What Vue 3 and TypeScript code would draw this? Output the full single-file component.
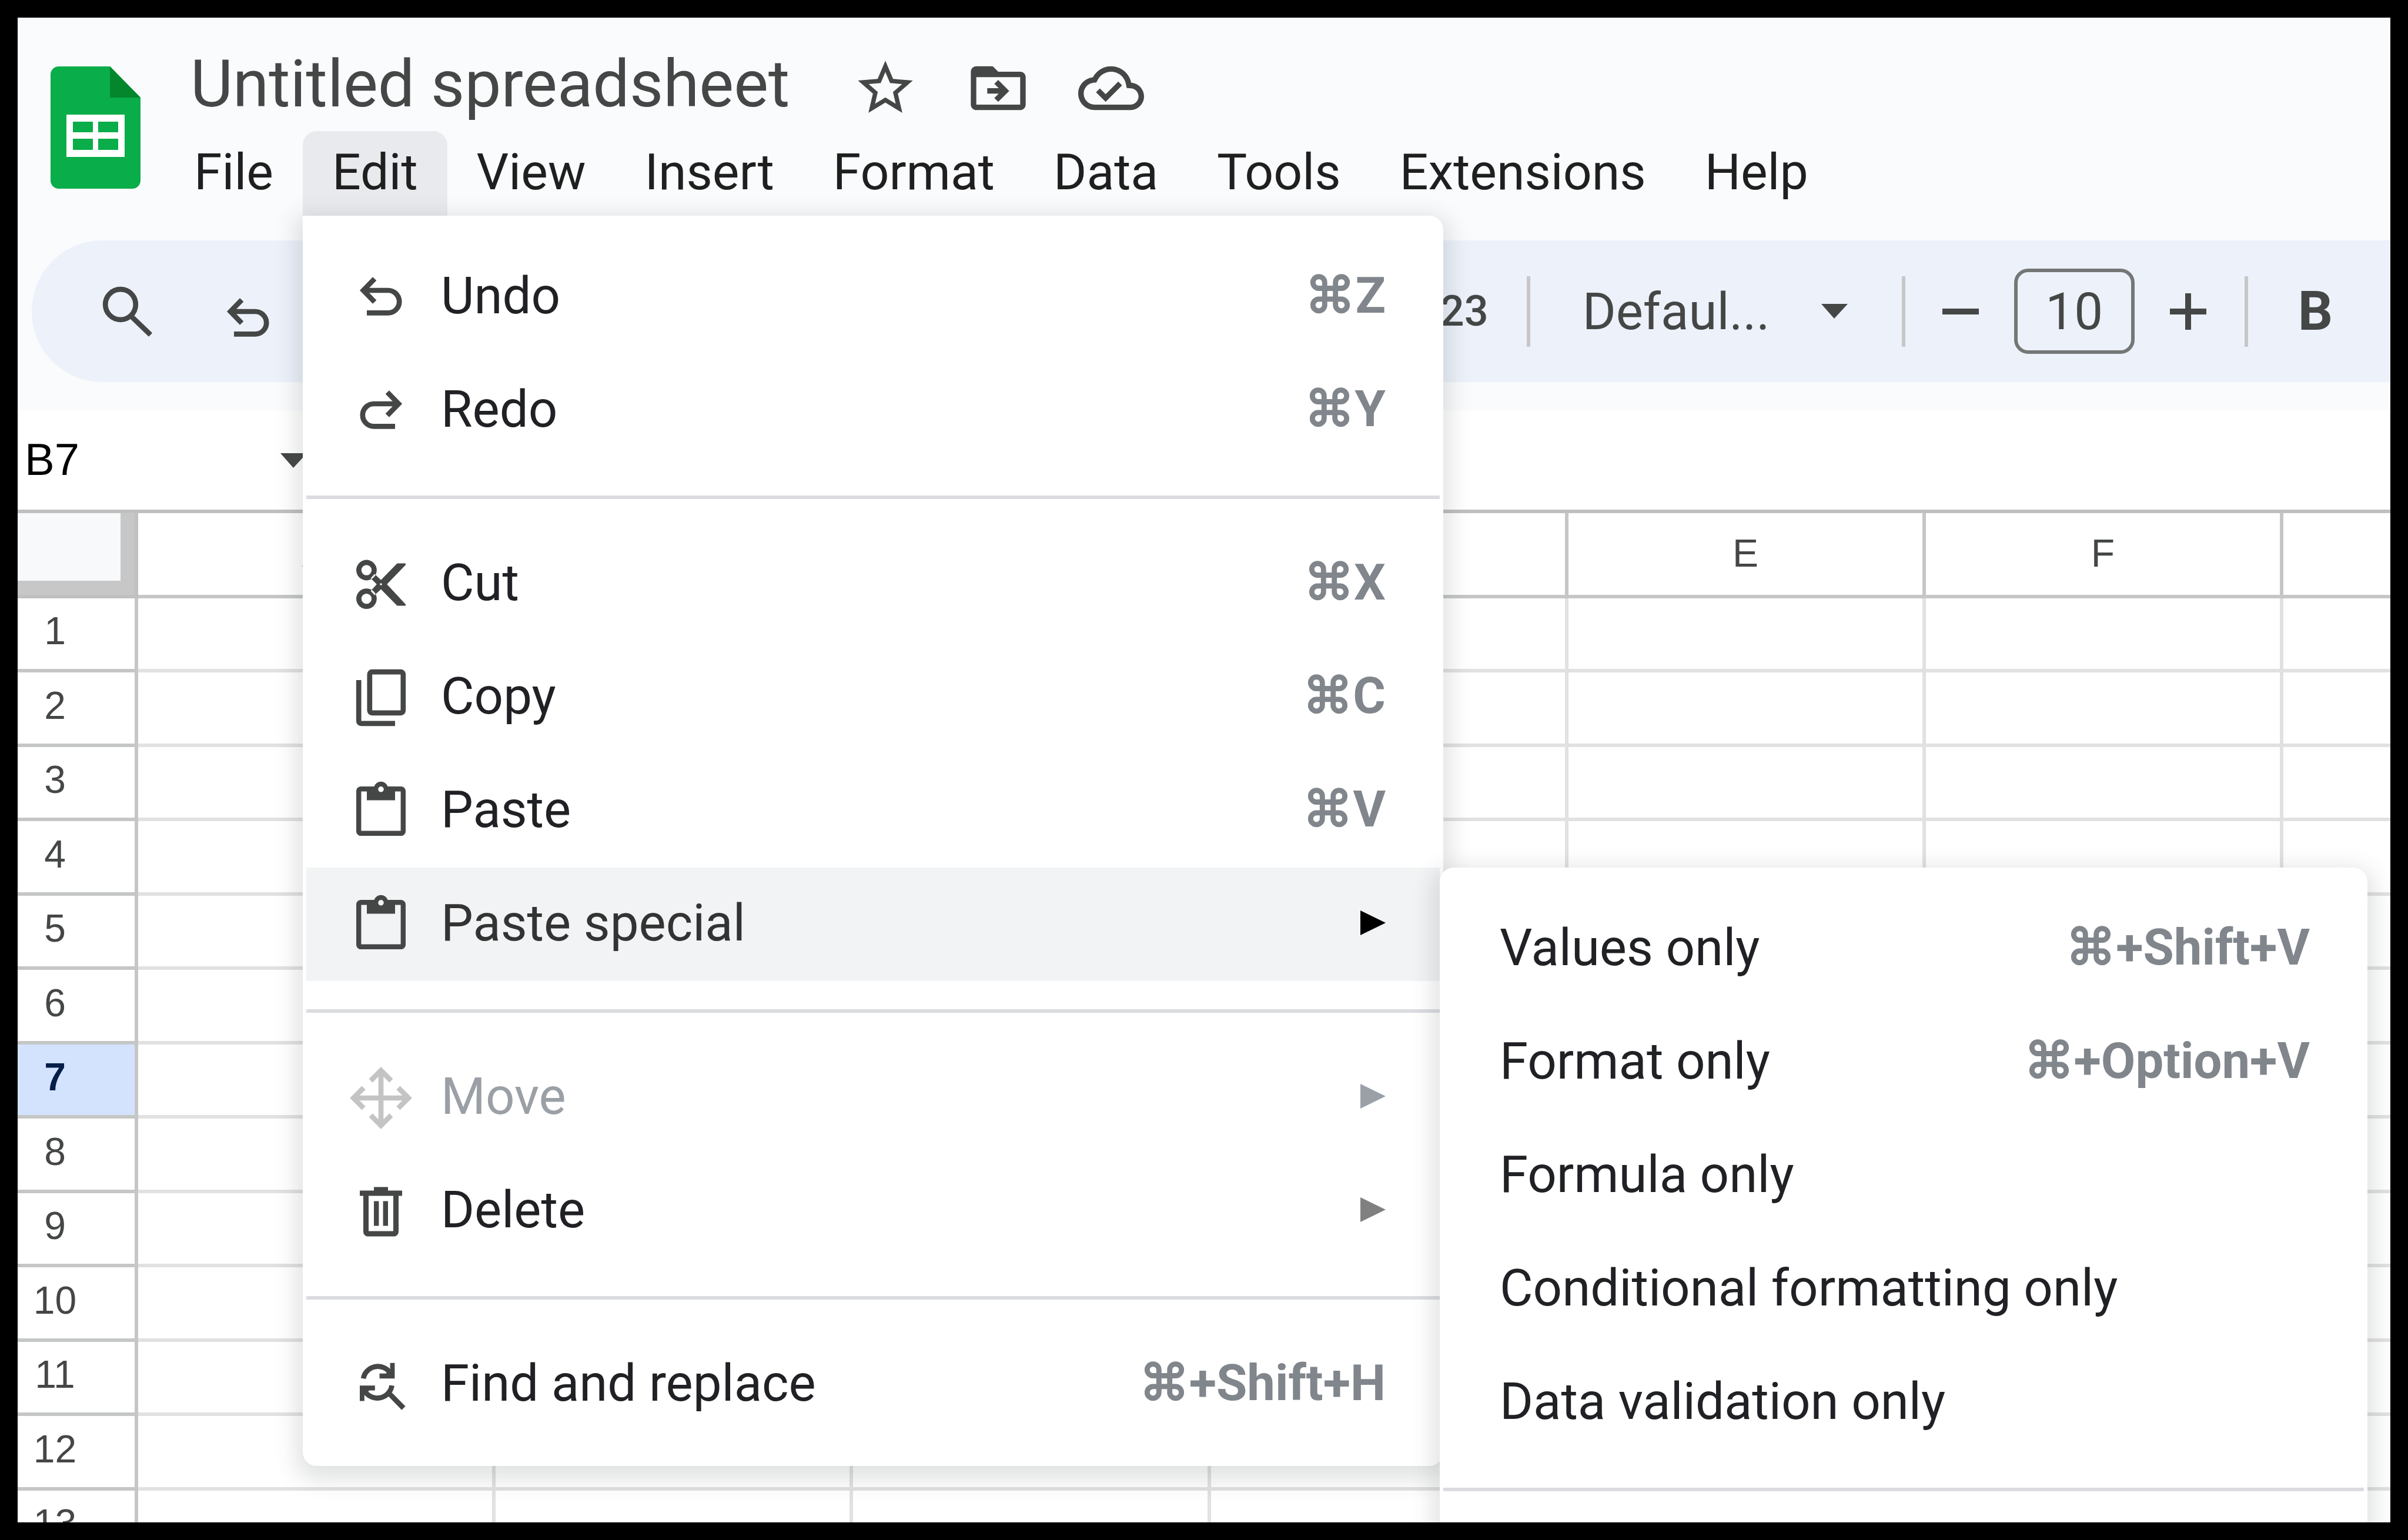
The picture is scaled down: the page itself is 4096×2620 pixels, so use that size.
<script setup lang="ts">
import { ref } from 'vue'

interface Icon {
  fill?: string
  stroke?: string
}

interface MenuEntry {
  label: string
  icon?: Icon
  shortcut?: string
  submenu?: MenuEntry[][]
  expandable?: boolean
  disabled?: boolean
  active?: boolean
}

const icons: Record<string, Icon> = {
  undo: { stroke: 'M4 7H11a3.2 3.2 0 0 1 0 6.4H5M7.2 3.7 4 7l3.2 3.3' },
  redo: { stroke: 'M14 7H7a3.2 3.2 0 0 0 0 6.4h6M10.8 3.7 14 7l-3.2 3.3' },
  cut: {
    fill:
      'M4.9 2.1a2.9 2.9 0 1 0 0 5.8 2.9 2.9 0 0 0 0-5.8zm0 1.45a1.45 1.45 0 1 1 0 2.9 1.45 1.45 0 0 1 0-2.9z' +
      'M4.9 10.2a2.9 2.9 0 1 0 0 5.8 2.9 2.9 0 0 0 0-5.8zm0 1.45a1.45 1.45 0 1 1 0 2.9 1.45 1.45 0 0 1 0-2.9z' +
      'M7.2 6.1 9 7.8l4.6-4.7H16v.4L10.7 9 16 14.7v.4h-2.4L9 10.4l-1.8 1.7-1.1-1.2L7.8 9 6.1 7.3zM9 8.7a.3.3 0 1 0 0 .6.3.3 0 0 0 0-.6z',
  },
  copy: {
    stroke: 'M6.5 1.7h8.1c.4 0 .7.3.7.7v10.2c0 .4-.3.7-.7.7H6.5c-.4 0-.7-.3-.7-.7V2.4c0-.4.3-.7.7-.7zM2.7 4v11.6c0 .4.3.7.7.7H13',
  },
  paste: {
    fill:
      'M14.7 2h-3.8a2 2 0 0 0-3.8 0H3.3C2.6 2 2 2.6 2 3.3v11.4c0 .7.6 1.3 1.3 1.3h11.4c.7 0 1.3-.6 1.3-1.3V3.3c0-.7-.6-1.3-1.3-1.3z' +
      'M9 2a.8.8 0 1 1 0 1.6A.8.8 0 0 1 9 2zm5.6 12.6H3.4V3.4H5v2.5h8V3.4h1.6z',
  },
  move: {
    stroke:
      'M9 1.2v15.6M1.2 9h15.6M6.1 4.1 9 1.2l2.9 2.9M6.1 13.9 9 16.8l2.9-2.9M4.1 6.1 1.2 9l2.9 2.9M13.9 6.1 16.8 9l-2.9 2.9',
  },
  trash: {
    fill:
      'M7 2.1h4v1h4v1.5h-1v10.1c0 .8-.6 1.4-1.4 1.4H5.4c-.8 0-1.4-.6-1.4-1.4V4.6H3V3.1h4zM5.5 4.6v10h7v-10z' +
      'M7 6.1h1.4v7H7zM9.6 6.1H11v7H9.6z',
  },
  findReplace: {
    fill: 'M12.9 2.8v4.4H8.6V5.8h1.8l1.2-1.2V2.8zM3 13.6V9.2h4.3v1.4H5.7l-1.4 1.3v1.7z',
    stroke: 'M4 7.2A4.2 4.2 0 0 1 11.6 5.6M4.4 10.8A4.2 4.2 0 0 0 12.1 9.2M11.1 11.2 15.4 15.6',
  },
  search: { stroke: 'M7 2.7a4.3 4.3 0 1 0 0 8.6 4.3 4.3 0 0 0 0-8.6zM10 10.3l5.5 5.3' },
}

const mainMenus = ['File', 'Edit', 'View', 'Insert', 'Format', 'Data', 'Tools', 'Extensions', 'Help']
const openMenu = ref('Edit')

const editMenu: MenuEntry[][] = [
  [
    { label: 'Undo', icon: icons.undo, shortcut: '⌘Z' },
    { label: 'Redo', icon: icons.redo, shortcut: '⌘Y' },
  ],
  [
    { label: 'Cut', icon: icons.cut, shortcut: '⌘X' },
    { label: 'Copy', icon: icons.copy, shortcut: '⌘C' },
    { label: 'Paste', icon: icons.paste, shortcut: '⌘V' },
    {
      label: 'Paste special',
      icon: icons.paste,
      expandable: true,
      active: true,
      submenu: [
        [
          { label: 'Values only', shortcut: '⌘+Shift+V' },
          { label: 'Format only', shortcut: '⌘+Option+V' },
          { label: 'Formula only' },
          { label: 'Conditional formatting only' },
          { label: 'Data validation only' },
        ],
        [],
      ],
    },
  ],
  [
    { label: 'Move', icon: icons.move, expandable: true, disabled: true },
    { label: 'Delete', icon: icons.trash, expandable: true },
  ],
  [{ label: 'Find and replace', icon: icons.findReplace, shortcut: '⌘+Shift+H' }],
]

const columns = ['A', 'B', 'C', 'D', 'E', 'F', 'G']
const rows = Array.from({ length: 13 }, (_, i) => i + 1)
const selectedRow = 7

const title = ref('Untitled spreadsheet')
const fontSize = ref('10')
const cellName = ref('B7')
</script>

<template>
  <div class="frame">
    <div class="window">
      <header class="header">
        <svg class="logo" viewBox="0 0 153 208" role="img" aria-label="Sheets">
          <path fill="#09ad49" d="M14 0h87l52 53v141a14 14 0 0 1-14 14H14a14 14 0 0 1-14-14V14A14 14 0 0 1 14 0z" />
          <path fill="#04862d" d="M101 0v53h52z" />
          <path
            fill="#fff"
            fill-rule="evenodd"
            d="M27 82h99v72H27zM38 94v18h34V94zM81 94v18h34V94zM38 123v19h34v-19zM81 123v19h34v-19z"
          />
        </svg>
        <div class="heading">
          <div class="title-row">
            <input v-model="title" class="title" aria-label="Document title" />
            <button class="title-button" aria-label="Star">
              <svg viewBox="0 0 24 24"><path d="M22 9.24l-7.19-.62L12 2 9.19 8.63 2 9.24l5.46 4.73L5.82 21 12 17.27 18.18 21l-1.63-7.03L22 9.24zM12 15.4l-3.76 2.27 1-4.28-3.32-2.88 4.38-.38L12 6.1l1.71 4.04 4.38.38-3.32 2.88 1 4.28L12 15.4z" /></svg>
            </button>
            <button class="title-button" aria-label="Move to folder">
              <svg viewBox="0 0 24 24"><path d="M20 6h-8l-2-2H4c-1.1 0-1.99.9-1.99 2L2 18c0 1.1.9 2 2 2h16c1.1 0 2-.9 2-2V8c0-1.1-.9-2-2-2zm0 12H4V8h16v10z" /><path d="M12.16 12H8v2h4.16l-1.59 1.59L11.99 17 16 13.01 11.99 9l-1.41 1.41L12.16 12z" /></svg>
            </button>
            <button class="title-button" aria-label="Saved to cloud">
              <svg viewBox="0 0 24 24"><path d="M19.35 10.04C18.67 6.59 15.64 4 12 4 9.11 4 6.6 5.64 5.35 8.04 2.34 8.36 0 10.91 0 14c0 3.31 2.69 6 6 6h13c2.76 0 5-2.24 5-5 0-2.64-2.05-4.78-4.65-4.96zM19 18H6c-2.21 0-4-1.79-4-4 0-2.05 1.53-3.76 3.56-3.97l1.07-.11.5-.95C8.08 7.14 9.94 6 12 6c2.62 0 4.88 1.86 5.39 4.43l.3 1.5 1.53.11c1.56.1 2.78 1.41 2.78 2.96 0 1.65-1.35 3-3 3zm-9-3.82l-2.09-2.09L6.5 13.5 10 17l6.01-6.01-1.41-1.41z" /></svg>
            </button>
          </div>

          <nav class="menubar">
            <div v-for="name in mainMenus" :key="name" class="menubar-item">
              <button class="menubar-button" :class="{ open: name === openMenu }">{{ name }}</button>

              <div v-if="name === 'Edit' && openMenu === 'Edit'" class="menu edit-menu">
                <ul v-for="(group, g) in editMenu" :key="g" class="menu-group">
                  <li v-for="entry in group" :key="entry.label" class="menu-row">
                    <button class="menu-item" :class="{ active: entry.active }" :disabled="entry.disabled">
                      <svg class="menu-icon" viewBox="0 0 18 18" aria-hidden="true">
                        <path v-if="entry.icon?.fill" class="solid" :d="entry.icon.fill" />
                        <path v-if="entry.icon?.stroke" class="line" :d="entry.icon.stroke" />
                      </svg>
                      <span class="label">{{ entry.label }}</span>
                      <span v-if="entry.shortcut" class="shortcut">{{ entry.shortcut }}</span>
                      <svg v-if="entry.expandable" class="expand" viewBox="0 0 43 42" aria-hidden="true">
                        <path d="M0 0v42l43-21z" />
                      </svg>
                    </button>

                    <div v-if="entry.submenu" class="menu paste-menu">
                      <ul v-for="(subgroup, s) in entry.submenu" :key="s" class="menu-group">
                        <li v-for="sub in subgroup" :key="sub.label" class="menu-row">
                          <button class="menu-item plain">
                            <span class="label">{{ sub.label }}</span>
                            <span v-if="sub.shortcut" class="shortcut">{{ sub.shortcut }}</span>
                          </button>
                        </li>
                      </ul>
                    </div>
                  </li>
                </ul>
              </div>
            </div>
          </nav>
        </div>
      </header>

      <div class="toolbar-area">
        <div class="toolbar">
          <div class="tools tools-start">
            <button class="tool" aria-label="Search the menus">
              <svg viewBox="0 0 18 18"><path class="line" :d="icons.search.stroke" /></svg>
            </button>
            <button class="tool" aria-label="Undo">
              <svg viewBox="0 -2 18 18"><path class="line" :d="icons.undo.stroke" /></svg>
            </button>
          </div>
          <div class="tools">
            <button class="number-format">123</button>
            <span class="divider"></span>
            <div class="font-picker">
              <select class="font-select" aria-label="Font">
                <option>Defaul...</option>
              </select>
              <svg class="caret" viewBox="0 0 45 25" aria-hidden="true"><path d="M0 0h45L22 25z" /></svg>
            </div>
            <span class="divider"></span>
            <div class="stepper">
              <button class="step" aria-label="Decrease font size">
                <svg viewBox="0 0 62 62"><path d="M0 26h62v10H0z" /></svg>
              </button>
              <input v-model="fontSize" class="font-size" aria-label="Font size" />
              <button class="step" aria-label="Increase font size">
                <svg viewBox="0 0 62 62"><path d="M0 26h26V0h10v26h26v10H36v26H26V36H0z" /></svg>
              </button>
            </div>
            <span class="divider"></span>
            <button class="bold" aria-label="Bold">B</button>
          </div>
        </div>
      </div>

      <div class="name-bar">
        <input v-model="cellName" class="name-box" aria-label="Name box" />
        <svg class="caret" viewBox="0 0 45 25" aria-hidden="true"><path d="M0 0h45L22 25z" /></svg>
      </div>

      <table class="grid">
        <colgroup>
          <col class="col-head" />
          <col v-for="c in 6" :key="c" class="col-cell" />
          <col />
        </colgroup>
        <thead>
          <tr>
            <th class="corner"></th>
            <th v-for="(c, i) in columns" :key="c" scope="col">{{ i < 6 ? c : '' }}</th>
          </tr>
        </thead>
        <tbody>
          <tr v-for="r in rows" :key="r">
            <th scope="row" :class="{ selected: r === selectedRow }">{{ r }}</th>
            <td v-for="c in columns" :key="c"></td>
          </tr>
        </tbody>
      </table>
    </div>
  </div>
</template>

<style>
body {
  margin: 0;
  background: #000;
}
</style>

<style scoped>
* {
  box-sizing: border-box;
}

button,
input,
select {
  margin: 0;
  padding: 0;
  border: 0;
  border-radius: 0;
  outline: 0;
  background: none;
  color: inherit;
  font: inherit;
}

svg {
  display: block;
  flex: none;
}

.frame {
  height: 100vh;
  padding: 30px;
  background: #000;
  font-family: Roboto, "Liberation Sans", sans-serif;
  font-size: 87px;
  color: #444746;
}

.window {
  display: flex;
  flex-direction: column;
  height: 100%;
  overflow: hidden;
  background: #fff;
}

.line {
  fill: none;
  stroke: currentColor;
  stroke-width: 1.45;
}

.solid {
  fill: currentColor;
  fill-rule: evenodd;
}

.header {
  display: flex;
  flex: none;
  gap: 41px;
  padding: 47px 0 42px 56px;
  background: #f9fbfd;
}

.logo {
  width: 153px;
  height: 208px;
  margin-top: 36px;
}

.title-row {
  display: flex;
  align-items: center;
  gap: 80px;
  height: 146px;
}

.title {
  width: 1090px;
  height: 146px;
  padding: 0 0 14px 44px;
  font-size: 111px;
}

.title-button svg {
  width: 112px;
  height: 112px;
  fill: currentColor;
}

.menubar {
  display: flex;
  font-size: 86px;
}

.menubar-item {
  position: relative;
}

.menubar-button {
  display: block;
  height: 144px;
  padding: 0 50px 6px;
  border-radius: 24px 24px 0 0;
  color: #1f1f1f;
}

.menubar-button.open {
  background: #e9eaee;
}

.menu {
  position: absolute;
  z-index: 2;
  padding: 42px 6px;
  border-radius: 24px;
  background: #fff;
  box-shadow: 0 12px 36px 12px rgba(60, 64, 67, 0.15);
  font-size: 87px;
}

.edit-menu {
  top: 100%;
  left: 0;
  width: 1940px;
  border-top-left-radius: 0;
}

.paste-menu {
  top: 0;
  left: 100%;
  width: 1578px;
  padding-bottom: 96px;
}

.menu-group {
  margin: 0;
  padding: 0;
  list-style: none;
}

.menu-group + .menu-group {
  margin-top: 48px;
  padding-top: 48px;
  border-top: 6px solid #dadce0;
}

.menu-row {
  position: relative;
}

.menu-item {
  display: flex;
  align-items: center;
  width: 100%;
  height: 193px;
  padding: 0 92px 0 73px;
  color: #202124;
  text-align: left;
}

.menu-item.plain {
  padding-left: 96px;
}

.menu-item.active {
  background: #f1f3f4;
  color: #333;
}

.menu-item:disabled {
  color: #9aa0a6;
}

.menu-icon {
  width: 108px;
  height: 108px;
  margin-right: 48px;
  color: #444746;
}

.menu-item:disabled .menu-icon {
  color: #c4c4c4;
}

.label,
.shortcut,
.expand {
  margin-bottom: 6px;
}

.label {
  flex: 1;
}

.shortcut {
  color: #80868b;
  font-size: 85px;
  font-weight: 700;
}

.expand {
  width: 43px;
  height: 42px;
  fill: #808080;
}

.active .expand {
  fill: #000;
}

.menu-item:disabled .expand {
  fill: #9aa0a6;
}

.toolbar-area {
  flex: none;
  padding: 0 0 49px 24px;
  background: #f9fbfd;
}

.toolbar {
  display: flex;
  justify-content: space-between;
  height: 241px;
  padding: 0 98px 0 109px;
  border-radius: 120px 0 0 120px;
  background: #ecf1fa;
}

.tools {
  display: flex;
  align-items: center;
}

.tools-start {
  gap: 97px;
}

.tool svg {
  width: 108px;
  height: 108px;
}

.divider {
  width: 6px;
  height: 120px;
  background: #c7c7c7;
}

.number-format {
  margin-right: 65px;
  font-size: 72px;
  font-weight: 500;
}

.font-picker {
  display: flex;
  align-items: center;
  padding: 0 92px 0 89px;
}

.font-select {
  width: 406px;
  height: 144px;
  appearance: none;
}

.caret {
  width: 45px;
  height: 25px;
  fill: #444746;
}

.stepper {
  display: flex;
  align-items: center;
  gap: 60px;
  padding: 0 65px 0 63px;
}

.step svg {
  width: 62px;
  height: 62px;
  fill: currentColor;
}

.font-size {
  width: 205px;
  height: 145px;
  border: 6px solid #747775;
  border-radius: 24px;
  text-align: center;
}

.bold {
  margin-left: 85px;
  font-size: 93px;
  font-weight: 700;
}

.name-bar {
  display: flex;
  flex: none;
  align-items: center;
  height: 168px;
  padding-left: 12px;
}

.name-box {
  width: 435px;
  height: 120px;
  padding-bottom: 4px;
  color: #000;
  font-family: "Liberation Sans", Arial, sans-serif;
  font-size: 76px;
}

.grid {
  flex: none;
  width: 100%;
  border-spacing: 0;
  border-top: 6px solid #c0c0c0;
  table-layout: fixed;
  font-family: "Liberation Sans", Arial, sans-serif;
  font-size: 66px;
  line-height: 72px;
}

.col-head {
  width: 205px;
}

.col-cell {
  width: 608px;
}

.col-cell:nth-child(4n) {
  width: 609px;
}

.grid th,
.grid td {
  padding: 0;
  border: solid #e1e1e1;
  border-width: 0 6px 6px 0;
}

.grid th {
  padding-bottom: 4px;
  border-color: #c4c7c5;
  font-weight: 400;
}

.grid th:last-child,
.grid td:last-child {
  border-right-width: 0;
}

.grid thead tr {
  height: 145px;
}

.grid tbody tr {
  height: 126px;
}

.grid tbody tr:nth-child(even) {
  height: 127px;
}

.grid tbody th {
  padding: 0 72px 10px 0;
}

.grid .corner {
  border-color: #c0c0c0;
  background: #f8f9fb;
  box-shadow: inset -24px -24px 0 #c7c7c7;
}

.grid .selected {
  background: #d3e3fd;
  color: #041e49;
  font-weight: 700;
}
</style>
